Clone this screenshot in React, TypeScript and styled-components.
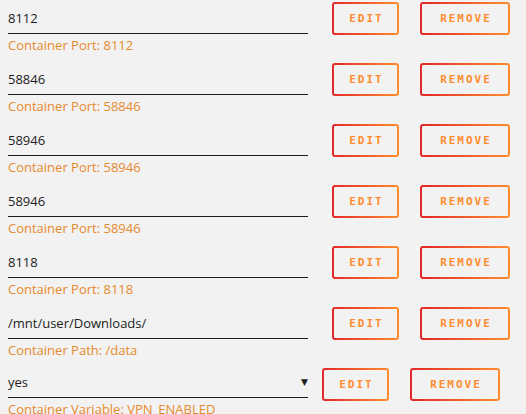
import React from 'react';
import styled, { createGlobalStyle } from 'styled-components';

const GlobalStyle = createGlobalStyle`
  html, body {
    margin: 0;
    padding: 0;
    background: #f2f2f2;
  }
  body {
    font-family: "Open Sans", "Liberation Sans", Arial, sans-serif;
    color: #1c1c1c;
  }
`;

interface Mapping {
  value: string;
  label: string;
  select?: boolean;
}

const mappings: Mapping[] = [
  { value: '8112', label: 'Container Port: 8112' },
  { value: '58846', label: 'Container Port: 58846' },
  { value: '58946', label: 'Container Port: 58946' },
  { value: '58946', label: 'Container Port: 58946' },
  { value: '8118', label: 'Container Port: 8118' },
  { value: '/mnt/user/Downloads/', label: 'Container Path: /data' },
  { value: 'yes', label: 'Container Variable: VPN_ENABLED', select: true },
];

const List = styled.div`
  display: flex;
  flex-direction: column;
`;

const Row = styled.div`
  display: flex;
  align-items: flex-start;
  height: 61px;
`;

const Field = styled.div`
  width: 300px;
  margin-left: 8px;
`;

const Input = styled.div<{ $select?: boolean }>`
  position: relative;
  box-sizing: border-box;
  height: ${(p) => (p.$select ? '32px' : '34px')};
  padding-top: ${(p) => (p.$select ? '7px' : '9px')};
  border-bottom: 1px solid #1c1c1c;
  font-size: 13px;
  line-height: 18px;
`;

const Arrow = styled.span`
  position: absolute;
  right: 0;
  top: 12px;
  font-family: "DejaVu Sans", sans-serif;
  font-size: 9px;
  line-height: 9px;
`;

const Hint = styled.div`
  margin-top: 2px;
  font-size: 13px;
  line-height: 18px;
  color: #e68a2e;
  white-space: nowrap;
`;

const Actions = styled.div<{ $select?: boolean }>`
  display: flex;
  gap: 21px;
  margin-top: 2px;
  margin-left: ${(p) => (p.$select ? '14px' : '24px')};
`;

const Button = styled.button<{ $wide?: boolean }>`
  box-sizing: border-box;
  width: ${(p) => (p.$wide ? '90px' : '67px')};
  height: 33px;
  padding: 0 0 0 2px;
  border: 2px solid transparent;
  border-radius: 3px;
  background:
    linear-gradient(#f2f2f2, #f2f2f2) padding-box,
    linear-gradient(90deg, #e22828, #ff8c2f) border-box;
  color: #ff8c2f;
  font-family: "DejaVu Sans Mono", monospace;
  font-weight: bold;
  font-size: 11px;
  letter-spacing: 2px;
  cursor: pointer;
`;

export default function App() {
  return (
    <>
      <GlobalStyle />
      <List>
        {mappings.map((m, i) => (
          <Row key={i}>
            <Field>
              <Input $select={m.select}>
                {m.value}
                {m.select && <Arrow>▼</Arrow>}
              </Input>
              <Hint>{m.label}</Hint>
            </Field>
            <Actions $select={m.select}>
              <Button>EDIT</Button>
              <Button $wide>REMOVE</Button>
            </Actions>
          </Row>
        ))}
      </List>
    </>
  );
}
